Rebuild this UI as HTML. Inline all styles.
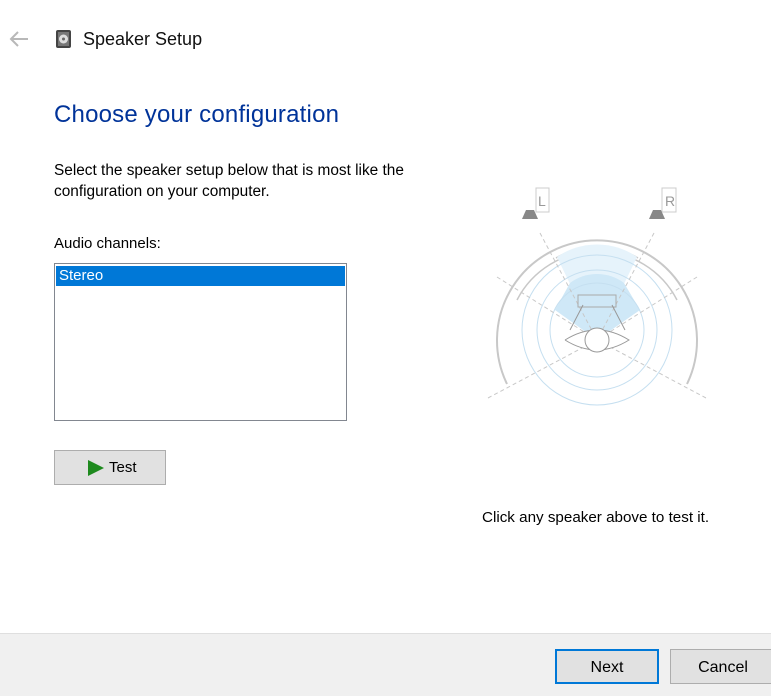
<!DOCTYPE html>
<html><head><meta charset="utf-8"><style>
body{margin:0;width:771px;height:695px;background:#fff;font-family:"Segoe UI","Liberation Sans",sans-serif;position:relative;overflow:hidden;color:#000}
.a{position:absolute;white-space:nowrap}
</style></head><body>
<svg class="a" style="left:8px;top:30px" width="22" height="18"><path d="M20 9H3M10 2L3 9l7 7" stroke="#b8b8b8" stroke-width="2" fill="none"/></svg>
<svg class="a" style="left:55px;top:29px" width="18" height="20"><rect x="1" y="1" width="15" height="18" rx="2" fill="#444"/><rect x="3" y="3" width="11" height="14" fill="#777"/><circle cx="8.5" cy="10" r="4.5" fill="#ddd"/><circle cx="8.5" cy="10" r="1.5" fill="#666"/></svg>
<div class="a" style="left:83px;top:29px;font-size:18px;color:#111">Speaker Setup</div>
<div class="a" style="left:54px;top:101px;font-size:24px;color:#003399;letter-spacing:0.2px">Choose your configuration</div>
<div class="a" style="left:54px;top:160px;font-size:15.4px;line-height:21px">Select the speaker setup below that is most like the<br>configuration on your computer.</div>
<div class="a" style="left:54px;top:235px;font-size:15px">Audio channels:</div>
<div class="a" style="left:54px;top:263px;width:291px;height:156px;border:1px solid #828790;background:#fff">
<div style="margin:2px 1px;height:20px;background:#0078d7;color:#fff;font-size:15px;line-height:20px;padding-left:3px">Stereo</div></div>
<div class="a" style="left:54px;top:450px;width:110px;height:33px;border:1px solid #adadad;background:#e1e1e1;font-size:15px">
<svg class="a" style="left:32px;top:8px" width="18" height="18"><path d="M1 1L17 9L1 17Z" fill="#1e8a1e"/></svg>
<span class="a" style="left:54px;top:8px">Test</span></div>
<svg class="a" style="left:480px;top:180px" width="240" height="230">
<g transform="translate(-480,-180)" fill="none">
<path d="M507 384A100 100 0 1 1 687 384" stroke="#c8c8c8" stroke-width="2"/>
<path d="M517 300A90 90 0 0 1 677 300" stroke="#c8c8c8" stroke-width="1.5"/>
<path d="M556 258A80 80 0 0 1 638 258" stroke="#c8c8c8" stroke-width="1.5"/>
<path d="M557 257A70 70 0 0 1 637 257L597 340Z" fill="#e6f3fb"/>
<path d="M570 283A45 45 0 0 1 624 283L640 310L597 340L555 310Z" fill="#cfe8f7"/>
<circle cx="597" cy="330" r="47" stroke="#c5dff0"/>
<circle cx="597" cy="330" r="60" stroke="#c5dff0"/>
<circle cx="597" cy="330" r="75" stroke="#c5dff0"/>
<path d="M540 233L597 340M654 233L597 340M497 277L597 340M697 277L597 340M488 398L597 340M706 398L597 340" stroke="#c8c8c8" stroke-dasharray="4 3"/>
<rect x="578" y="295" width="38" height="12" stroke="#aaa"/>
<path d="M583 305L570 330M612 305L625 330M565 340Q597 320 629 340Q597 360 565 340" stroke="#999" fill="#fff"/>
<circle cx="597" cy="340" r="12" stroke="#999" fill="#fff"/>
<rect x="536" y="188" width="13" height="24" stroke="#ccc" fill="#fff"/>
<text x="538" y="206" font-size="14" fill="#999" font-family="Liberation Sans">L</text>
<path d="M522 219L526 210L534 210L538 219Z" fill="#888"/>
<rect x="662" y="188" width="14" height="24" stroke="#ccc" fill="#fff"/>
<text x="665" y="206" font-size="14" fill="#999" font-family="Liberation Sans">R</text>
<path d="M649 219L653 210L661 210L665 219Z" fill="#888"/>
</g></svg>
<div class="a" style="left:482px;top:509px;font-size:15.2px">Click any speaker above to test it.</div>
<div class="a" style="left:0;top:633px;width:771px;height:62px;background:#f0f0f0;border-top:1px solid #dfdfdf"></div>
<div class="a" style="left:555px;top:649px;width:100px;height:31px;border:2px solid #0078d7;background:#e1e1e1;font-size:16px;text-align:center;line-height:33px">Next</div>
<div class="a" style="left:670px;top:649px;width:104px;height:33px;border:1px solid #adadad;background:#e1e1e1;font-size:16px;text-align:center;line-height:35px">Cancel</div>
</body></html>
